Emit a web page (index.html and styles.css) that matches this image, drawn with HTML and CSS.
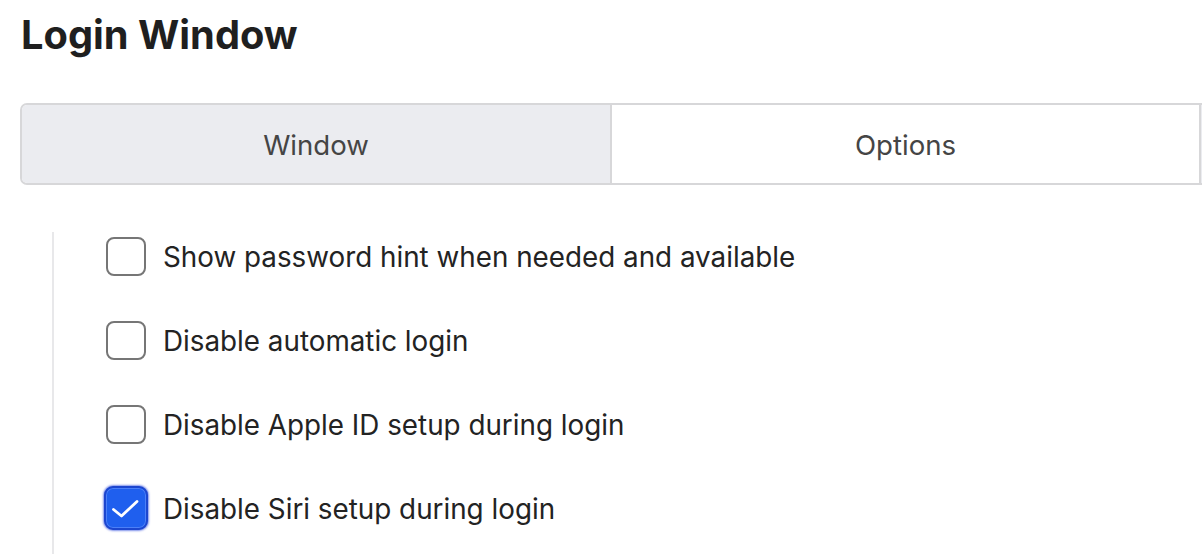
FILE: index.html
```html
<!DOCTYPE html>
<html lang="en">
<head>
<meta charset="utf-8">
<title>Login Window</title>
<link rel="stylesheet" href="styles.css">
</head>
<body>
  <h1 class="title">Login Window</h1>
  <div class="tabs">
    <div class="tab tab-active">Window</div>
    <div class="tab tab-second">Options</div>
    <div class="tab tab-third"></div>
  </div>
  <div class="options">
    <label class="row">
      <span class="box"></span>
      <span class="label">Show password hint when needed and available</span>
    </label>
    <label class="row">
      <span class="box"></span>
      <span class="label">Disable automatic login</span>
    </label>
    <label class="row">
      <span class="box"></span>
      <span class="label">Disable Apple ID setup during login</span>
    </label>
    <label class="row">
      <span class="box box-checked">
        <svg width="40" height="40" viewBox="0 0 40 40" aria-hidden="true"><path d="M7.5 21.5 L15.5 28 L31 13.5" fill="none" stroke="#ffffff" stroke-width="2.8" stroke-linecap="round" stroke-linejoin="round"/></svg>
      </span>
      <span class="label">Disable Siri setup during login</span>
    </label>
  </div>
</body>
</html>
```

FILE: styles.css
```css
html, body {
  margin: 0;
  padding: 0;
  background: #ffffff;
  overflow: hidden;
}
body {
  width: 1202px;
  height: 554px;
  font-family: Inter, "Noto Sans", "Liberation Sans", sans-serif;
  color: #222222;
}
.title {
  margin: 0;
  padding: 10px 0 0 21px;
  font-size: 39.8px;
  font-weight: 700;
  line-height: 50px;
  color: #1f1f1f;
}
.tabs {
  display: flex;
  margin: 43px 0 0 20px;
  width: 1800px;
  height: 82px;
  box-sizing: border-box;
  border: 2px solid #d7d7d9;
  border-radius: 7px;
  overflow: hidden;
}
.tab {
  flex: 0 0 auto;
  display: flex;
  align-items: center;
  justify-content: center;
  padding-top: 2px;
  font-size: 27.6px;
  color: #454545;
  background: #ffffff;
  border-right: 2px solid #d7d7d9;
}
.tab-active {
  width: 588px;
  background: #ebecf0;
}
.tab-second {
  width: 587px;
}
.tab-third {
  width: 587px;
  background: #ebecf0;
}
.options {
  margin: 47px 0 0 52px;
  padding: 4px 0 40px 0;
  border-left: 2px solid #e8e8ea;
  display: flex;
  flex-direction: column;
  gap: 44px;
}
.row {
  display: flex;
  align-items: center;
  height: 40px;
  padding-left: 52px;
}
.box {
  flex: 0 0 auto;
  width: 40px;
  height: 39px;
  box-sizing: border-box;
  border: 2px solid #767676;
  border-radius: 8px;
  background: #ffffff;
  display: flex;
  align-items: center;
  justify-content: center;
}
.box-checked {
  width: 44px;
  height: 44px;
  margin: 0 -2px;
  background: #1f5fee;
  border: 2px solid #1c46cf;
  border-radius: 9px;
  box-shadow: 0 0 2px 1px rgba(40, 70, 220, 0.6), inset 0 0 0 1px rgba(120, 160, 255, 0.5);
}
.label {
  margin-left: 17px;
  padding-top: 2px;
  font-size: 27.8px;
  line-height: 34px;
  color: #232323;
  white-space: nowrap;
}
```
